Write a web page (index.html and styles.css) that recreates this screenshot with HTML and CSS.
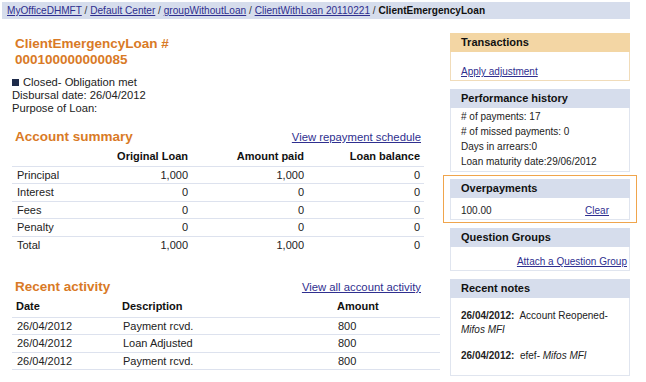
FILE: index.html
```html
<!DOCTYPE html>
<html lang="en">
<head>
    <meta charset="UTF-8">
    <title>ClientEmergencyLoan</title>
    <link rel="stylesheet" href="styles.css">
</head>
<body>
    <div class="breadcrumb">
        <a href="#">MyOfficeDHMFT</a> / <a href="#">Default Center</a> / <a href="#">groupWithoutLoan</a> / <a href="#">ClientWithLoan 20110221</a> / <b>ClientEmergencyLoan</b>
    </div>

    <div class="page">
        <div class="main">
            <h1 class="title">ClientEmergencyLoan #<br>000100000000085</h1>

            <div class="details">
                <div><span class="status-icon"></span>Closed- Obligation met</div>
                <div>Disbursal date: 26/04/2012</div>
                <div>Purpose of Loan:</div>
            </div>

            <div class="section summary">
                <div class="section-head">
                    <h2>Account summary</h2>
                    <a href="#">View repayment schedule</a>
                </div>
                <table class="grid summary-table">
                    <tr>
                        <th class="c1"></th>
                        <th class="c2">Original Loan</th>
                        <th class="c3">Amount paid</th>
                        <th class="c4">Loan balance</th>
                    </tr>
                    <tr><td>Principal</td><td>1,000</td><td>1,000</td><td>0</td></tr>
                    <tr><td>Interest</td><td>0</td><td>0</td><td>0</td></tr>
                    <tr><td>Fees</td><td>0</td><td>0</td><td>0</td></tr>
                    <tr><td>Penalty</td><td>0</td><td>0</td><td>0</td></tr>
                    <tr class="last"><td>Total</td><td>1,000</td><td>1,000</td><td>0</td></tr>
                </table>
            </div>

            <div class="section activity">
                <div class="section-head">
                    <h2>Recent activity</h2>
                    <a href="#">View all account activity</a>
                </div>
                <table class="grid activity-table">
                    <tr>
                        <th class="a1">Date</th>
                        <th class="a2">Description</th>
                        <th class="a3">Amount</th>
                    </tr>
                    <tr><td>26/04/2012</td><td>Payment rcvd.</td><td>800</td></tr>
                    <tr><td>26/04/2012</td><td>Loan Adjusted</td><td>800</td></tr>
                    <tr><td>26/04/2012</td><td>Payment rcvd.</td><td>800</td></tr>
                </table>
            </div>
        </div>

        <div class="side">
            <div class="panel panel-orange">
                <div class="panel-head">Transactions</div>
                <div class="panel-body trans-body"><a href="#">Apply adjustment</a></div>
            </div>

            <div class="panel">
                <div class="panel-head">Performance history</div>
                <div class="panel-body perf-body">
                    <div># of payments: 17</div>
                    <div># of missed payments: 0</div>
                    <div>Days in arrears:0</div>
                    <div>Loan maturity date:29/06/2012</div>
                </div>
            </div>

            <div class="highlight">
                <div class="panel">
                    <div class="panel-head">Overpayments</div>
                    <div class="panel-body over-body">
                        <span>100.00</span>
                        <a href="#">Clear</a>
                    </div>
                </div>
            </div>

            <div class="panel">
                <div class="panel-head">Question Groups</div>
                <div class="panel-body qg-body"><a href="#">Attach a Question Group</a></div>
            </div>

            <div class="panel">
                <div class="panel-head">Recent notes</div>
                <div class="panel-body notes-body">
                    <p><b>26/04/2012:</b>&nbsp; Account Reopened- <i>Mifos MFI</i></p>
                    <p><b>26/04/2012:</b>&nbsp; efef- <i>Mifos MFI</i></p>
                </div>
            </div>
        </div>
    </div>
</body>
</html>
```

FILE: styles.css
```css
body {
    margin: 0;
    font-family: 'Liberation Sans', Arial, sans-serif;
    font-size: 11px;
    color: #222;
    background: #fff;
}

a {
    color: #2f2f8f;
}

.breadcrumb {
    margin: 2px 16px 0 2px;
    padding-left: 5px;
    height: 17px;
    line-height: 17px;
    font-size: 10.1px;
    background-color: #d6ddec;
    color: #333;
}

.breadcrumb b {
    color: #111;
}

.page {
    display: flex;
    align-items: flex-start;
    padding-left: 12px;
    gap: 10px;
}

.main {
    width: 428px;
}

.title {
    margin: 17px 0 0 3px;
    font-size: 13.5px;
    line-height: 16px;
    color: #d97a26;
}

.details {
    margin-top: 8px;
    line-height: 13px;
    font-size: 11.2px;
}

.status-icon {
    display: inline-block;
    width: 7px;
    height: 7px;
    margin: 0 4px 0 0;
    background-color: #1e2b4a;
}

.section-head {
    display: flex;
    justify-content: space-between;
    align-items: baseline;
    margin-right: 19px;
    height: 16px;
}

.section-head h2 {
    margin: 0 0 0 3px;
    font-size: 13.5px;
    line-height: 16px;
    color: #d97a26;
}

.section-head a {
    font-size: 11.3px;
}

.summary {
    margin-top: 14px;
}

.activity {
    margin-top: 26px;
}

.grid {
    border-collapse: collapse;
    margin-top: 2px;
}

.grid th {
    font-weight: bold;
    color: #111;
    padding: 3px 4px;
    line-height: 12.5px;
    border-bottom: 1px solid #dde2ee;
}

.grid td {
    padding: 2px 4px 2px 5px;
    line-height: 12.5px;
    border-bottom: 1px solid #dde2ee;
}

.summary-table {
    width: 412px;
}

.summary-table .last td {
    border-bottom: none;
}

.summary-table th,
.summary-table td {
    text-align: right;
}

.summary-table td:first-child {
    text-align: left;
}

.c1 { width: 60px; }
.c2 { width: 104px; }
.c3 { width: 108px; }
.c4 { width: 108px; }

.activity-table {
    width: 428px;
    margin-top: 1px;
}

.activity-table th {
    text-align: left;
    padding: 4px 4px;
}

.a1 { width: 98px; }
.a2 { width: 207px; }

.side {
    width: 180px;
    margin-top: 14px;
}

.panel {
    margin-bottom: 8px;
}

.panel-head {
    height: 19px;
    line-height: 19px;
    padding-left: 11px;
    font-weight: bold;
    color: #111;
    background-color: #d6ddec;
}

.panel-body {
    border: 1px solid #e0e5ef;
    border-top: none;
    font-size: 10px;
    padding: 0 10px;
}

.panel-orange .panel-head {
    background-color: #f3d6a4;
}

.panel-orange .panel-body {
    border-color: #f1dcb9;
}

.trans-body {
    padding-top: 14px;
    padding-bottom: 2px;
    line-height: 12px;
}

.perf-body {
    padding-top: 1px;
    padding-bottom: 2px;
    line-height: 15px;
}

.highlight {
    margin: -5px -7px 5px;
    padding: 3px 6px 2px 6px;
    border: 1px solid #f0a54c;
}

.highlight .panel {
    margin-bottom: 0;
}

.over-body {
    display: flex;
    justify-content: space-between;
    padding: 6px 20px 2px 10px;
    line-height: 13px;
}

.qg-body {
    text-align: right;
    padding: 9px 2px 2px 10px;
    line-height: 12px;
}

.panel-notes {
    margin-bottom: 0;
}

.notes-body {
    padding-top: 11px;
    padding-bottom: 0;
    line-height: 14px;
}

.notes-body p {
    margin: 0 0 12px;
}
```
